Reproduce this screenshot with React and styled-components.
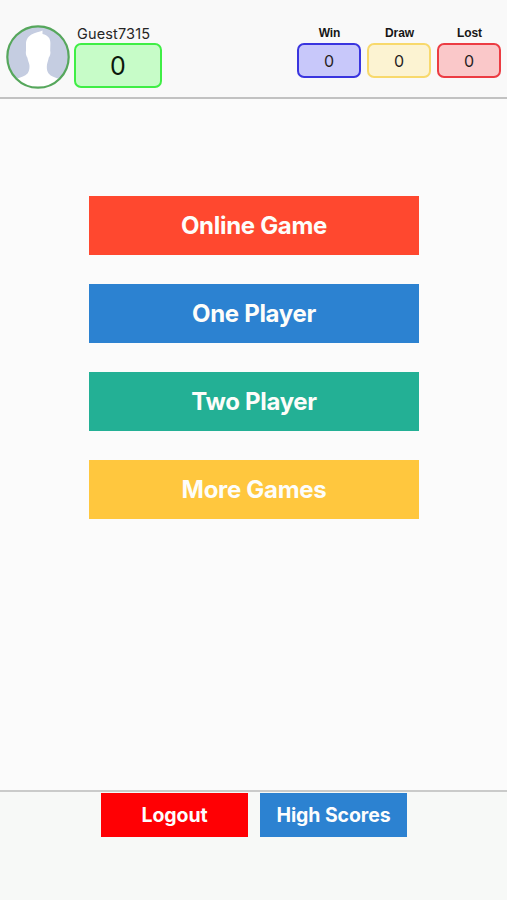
import React from "react";
import styled, { createGlobalStyle } from "styled-components";

const GlobalStyle = createGlobalStyle`
  * { box-sizing: border-box; }
  body {
    margin: 0;
    background: #fbfbfb;
    font-family: Inter, "Liberation Sans", sans-serif;
  }
  button { font-family: inherit; }
`;

const Screen = styled.div`
  display: flex;
  flex-direction: column;
  width: 507px;
  height: 900px;
  background: #fbfbfb;
`;

const Header = styled.header`
  display: flex;
  align-items: flex-start;
  height: 99px;
  padding: 25px 6px 0 6px;
  border-bottom: 2px solid #c2c2c2;
  background: #f9f9f9;
`;

const Avatar = styled.svg`
  display: block;
  width: 64px;
  height: 64px;
  flex: none;
`;

const Profile = styled.div`
  width: 88px;
  margin-left: 4px;
`;

const PlayerName = styled.div`
  height: 18px;
  padding-left: 3px;
  font-size: 14.5px;
  line-height: 17px;
  letter-spacing: 0.15px;
  white-space: nowrap;
  color: #262626;
`;

const Score = styled.div`
  height: 45px;
  border: 2px solid #3fee45;
  border-radius: 7px;
  background: #c7fcc8;
  color: #0c180c;
  font-size: 25px;
  line-height: 42px;
  text-align: center;
`;

const Stats = styled.div`
  display: flex;
  gap: 6px;
  margin-left: auto;
`;

const Stat = styled.div`
  width: 64px;
  text-align: center;
`;

const StatLabel = styled.div`
  height: 18px;
  padding: 1px 0 0 1px;
  font-family: "Liberation Sans", sans-serif;
  font-size: 12px;
  font-weight: 700;
  letter-spacing: -0.1px;
  line-height: 15px;
  color: #161616;
`;

const StatValue = styled.div`
  height: 35px;
  border: 2px solid ${({ $edge }) => $edge};
  border-radius: 7px;
  background: ${({ $fill }) => $fill};
  color: #272323;
  font-size: 16px;
  line-height: 32px;
`;

const Menu = styled.main`
  display: flex;
  flex: 1;
  flex-direction: column;
  align-items: center;
  gap: 29.1px;
  padding: 97.2px 0 0 1px;
`;

const MenuButton = styled.button`
  width: 330px;
  height: 58.9px;
  padding: 0;
  border: 0;
  background: ${({ $color }) => $color};
  color: #fdfdfa;
  font-size: 24px;
  font-weight: 700;
  letter-spacing: -0.3px;
  line-height: 58px;
`;

const Footer = styled.footer`
  display: flex;
  justify-content: center;
  align-items: flex-start;
  gap: 12px;
  height: 110px;
  padding-left: 1px;
  border-top: 2px solid #cacbca;
  background: #f7f9f7;
`;

const FooterButton = styled.button`
  width: 147px;
  height: 44px;
  margin-top: 0.6px;
  padding: 0;
  border: 0;
  background: ${({ $color }) => $color};
  color: #fdfdfd;
  font-size: 19.5px;
  font-weight: 700;
  letter-spacing: -0.1px;
  line-height: 44px;
`;

const stats = [
  { label: "Win", edge: "#3a35df", fill: "#c8c8fa" },
  { label: "Draw", edge: "#f8d96c", fill: "#fcf3d2" },
  { label: "Lost", edge: "#ec3c43", fill: "#fac8c9" },
];

const modes = [
  { label: "Online Game", color: "#ff482f" },
  { label: "One Player", color: "#2c82d1" },
  { label: "Two Player", color: "#23b095" },
  { label: "More Games", color: "#ffc73e" },
];

function PlayerAvatar() {
  return (
    <Avatar viewBox="0 0 64 64" aria-label="Player avatar">
      <defs>
        <clipPath id="avatar-disc">
          <circle cx="32" cy="32" r="31" />
        </clipPath>
      </defs>
      <g clipPath="url(#avatar-disc)">
        <rect width="64" height="64" fill="#c5cde1" />
        <path
          fill="#fff"
          d="M36.5 5.5C33.5 7 29 7.5 25.5 9.5C21.5 12 20 15 20 19L20 26C19.5 28 20.2 31 21.3 32.5C22 36 23 37.5 23.4 40C23.7 43 23.3 46 21.5 48.5C19 51 15 52 11.5 53.5L10 64H56L53.5 54C49 52.5 45 51.5 42.6 48.5C40.8 46 40.6 43 41 39.5C41.5 37 42.4 35 42.8 32.5C44.2 31 44.8 28 44.2 26L44.4 18C44.3 13 42 10.5 36.5 9Z"
        />
      </g>
      <circle cx="32" cy="32" r="30.7" fill="none" stroke="#56a75c" strokeWidth="2.2" />
    </Avatar>
  );
}

export default function App() {
  return (
    <>
      <GlobalStyle />
      <Screen>
        <Header>
          <PlayerAvatar />
          <Profile>
            <PlayerName>Guest7315</PlayerName>
            <Score>0</Score>
          </Profile>
          <Stats>
            {stats.map(({ label, edge, fill }) => (
              <Stat key={label}>
                <StatLabel>{label}</StatLabel>
                <StatValue $edge={edge} $fill={fill}>0</StatValue>
              </Stat>
            ))}
          </Stats>
        </Header>
        <Menu>
          {modes.map(({ label, color }) => (
            <MenuButton key={label} $color={color}>{label}</MenuButton>
          ))}
        </Menu>
        <Footer>
          <FooterButton $color="#ff0004">Logout</FooterButton>
          <FooterButton $color="#2c82d1">High Scores</FooterButton>
        </Footer>
      </Screen>
    </>
  );
}
